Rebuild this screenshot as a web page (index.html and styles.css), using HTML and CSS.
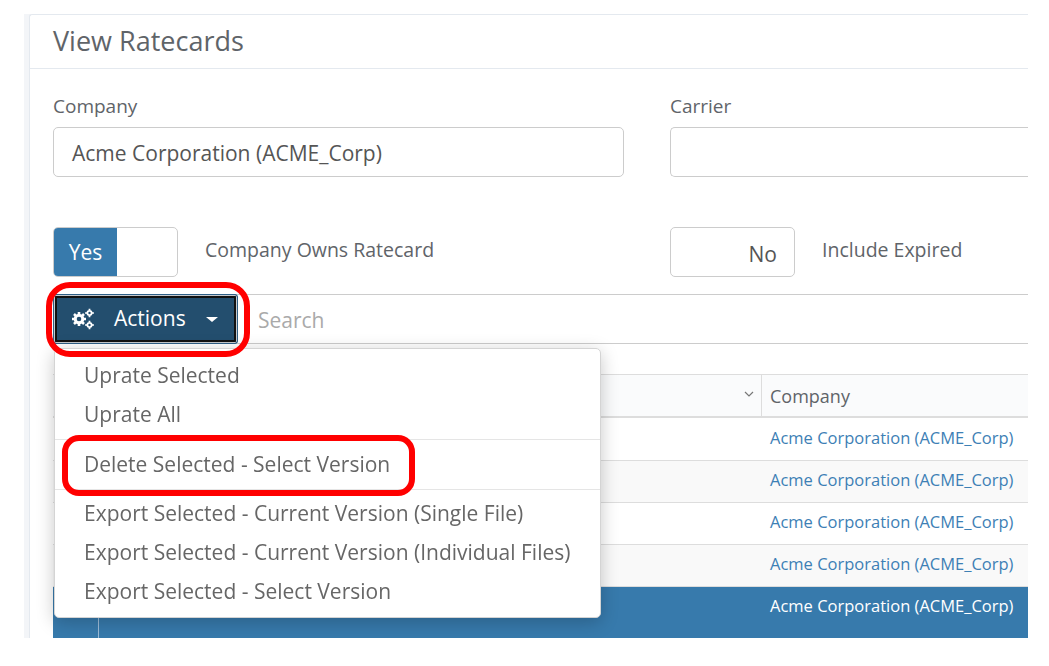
FILE: index.html
```html
<!DOCTYPE html>
<html lang="en">
<head>
<meta charset="utf-8">
<title>View Ratecards</title>
<link rel="stylesheet" href="styles.css">
</head>
<body>
<div class="viewport">
  <div class="strip">
    <main class="card">
      <h1 class="card-title">View Ratecards</h1>
      <div class="card-body">
        <div class="filters">
          <div class="field">
            <label class="field-label">Company</label>
            <div class="input">Acme Corporation (ACME_Corp)</div>
            <div class="toggle-row">
              <div class="toggle"><span class="toggle-yes">Yes</span></div>
              <span class="toggle-label">Company Owns Ratecard</span>
            </div>
          </div>
          <div class="field field-wide">
            <label class="field-label">Carrier</label>
            <div class="input input-open"></div>
            <div class="toggle-row">
              <div class="toggle toggle-off"><span class="toggle-no">No</span></div>
              <span class="toggle-label">Include Expired</span>
            </div>
          </div>
        </div>
        <div class="toolbar">
          <button class="actions">
            <svg class="gears" viewBox="0 0 24 22" width="24" height="22" aria-hidden="true">
              <g fill="none" stroke="#fff">
                <circle cx="8" cy="11" r="3.800" stroke-width="3"/>
                <path d="M8 4v2.500M8 15.500V18M1 11h2.500M12.500 11H15M3 6l1.800 1.800M11.200 14.200L13 16M3 16l1.800-1.800M11.200 7.800L13 6" stroke-width="2.600"/>
                <circle cx="18.500" cy="5" r="2.100" stroke-width="1.800"/>
                <path d="M18.500 .8v1.500M18.500 7.700v1.500M14.300 5h1.500M21.200 5h1.500" stroke-width="1.800"/>
                <circle cx="18.500" cy="17" r="2.100" stroke-width="1.800"/>
                <path d="M18.500 12.800v1.500M18.500 19.700v1.500M14.300 17h1.500M21.200 17h1.500" stroke-width="1.800"/>
              </g>
            </svg>
            <span class="actions-text">Actions</span>
            <span class="caret"></span>
          </button>
          <div class="search">Search</div>
        </div>
        <div class="grid">
          <div class="grid-row grid-head">
            <div class="cell-main"><svg class="chev" viewBox="0 0 10 6" width="10" height="6" aria-hidden="true"><path d="M1 1l4 4 4-4" fill="none" stroke="#777" stroke-width="1.200"/></svg></div>
            <div class="cell-company cell-head">Company</div>
          </div>
          <div class="grid-row"><div class="cell-main"></div><div class="cell-company"><a class="link">Acme Corporation (ACME_Corp)</a></div></div>
          <div class="grid-row grid-alt"><div class="cell-main"></div><div class="cell-company"><a class="link">Acme Corporation (ACME_Corp)</a></div></div>
          <div class="grid-row"><div class="cell-main"></div><div class="cell-company"><a class="link">Acme Corporation (ACME_Corp)</a></div></div>
          <div class="grid-row grid-alt"><div class="cell-main"></div><div class="cell-company"><a class="link">Acme Corporation (ACME_Corp)</a></div></div>
          <div class="grid-row grid-selected"><div class="cell-check"></div><div class="cell-main"></div><div class="cell-company"><a class="link">Acme Corporation (ACME_Corp)</a></div></div>
        </div>
      </div>
    </main>
  </div>
  <ul class="menu">
    <li class="menu-item">Uprate Selected</li>
    <li class="menu-item">Uprate All</li>
    <li class="menu-divider menu-divider-first"></li>
    <li class="menu-item">Delete Selected - Select Version</li>
    <li class="menu-divider"></li>
    <li class="menu-item">Export Selected - Current Version (Single File)</li>
    <li class="menu-item">Export Selected - Current Version (Individual Files)</li>
    <li class="menu-item">Export Selected - Select Version</li>
  </ul>
  <div class="mark mark-actions"></div>
  <div class="mark mark-delete"></div>
</div>
</body>
</html>
```

FILE: styles.css
```css
* { box-sizing: border-box; }
html, body { margin: 0; padding: 0; background: #fff; }
body { font-family: "Open Sans", "Noto Sans", sans-serif; color: #555; }

.viewport { position: relative; width: 1028px; height: 638px; padding: 14px 0 0 24px; overflow: hidden; filter: blur(0.35px); }
.strip { background: #f3f5f8; padding-left: 5px; height: 100%; }
.card { background: #fff; border-top: 1px solid #e4e9ef; border-left: 1px solid #e4e9ef; border-top-left-radius: 3px; height: 700px; }
.card-title { margin: 0; height: 54px; padding: 8px 0 0 23px; font-size: 27px; line-height: 36px; font-weight: 400; color: #5f6469; border-bottom: 1px solid #e4e9ef; }
.card-body { padding: 26px 0 0 23px; }

.filters { display: flex; gap: 46px; }
.field { width: 571px; flex: none; }
.field-wide { width: 500px; }
.field-label { display: block; font-size: 19px; line-height: 26px; height: 34px; margin-top: -2px; color: #5f6469; }
.input { height: 50px; border: 1px solid #ccc; border-radius: 5px; font-size: 21px; line-height: 50px; padding-left: 18px; color: #555; background: #fff; }
.input-open { border-right: 0; border-radius: 5px 0 0 5px; }

.toggle-row { display: flex; margin-top: 50px; height: 50px; }
.toggle { width: 125px; height: 50px; border: 1px solid #ccc; border-radius: 5px; flex: none; overflow: hidden; }
.toggle-yes { display: block; width: 63px; height: 100%; background: #377aac; color: #fff; font-size: 21px; line-height: 49px; text-align: center; }
.toggle-no { display: block; text-align: right; padding-right: 17px; font-size: 21px; line-height: 52px; color: #555; }
.toggle-label { margin-left: 27px; font-size: 19.500px; line-height: 46px; color: #5f6469; }

.toolbar { display: flex; margin-top: 17px; height: 50px; border-top: 1px solid #ccc; border-bottom: 1px solid #ccc; align-items: stretch; }
.actions { display: flex; align-items: center; flex: none; width: 185px; height: 50px; margin: -1px 0; padding: 0 0 2px 17px; background: #234e6e; border: 1px solid #2e5f86; border-radius: 3px; outline: 2px solid #111; outline-offset: -4px; box-shadow: inset 0 0 0 1px #c4c8cc; color: #fff; font: 400 21px "Open Sans", sans-serif; }
.gears { flex: none; margin-top: 2px; }
.actions-text { margin-left: 19px; }
.caret { width: 0; height: 0; margin: 3px 0 0 20px; border-left: 6px solid transparent; border-right: 6px solid transparent; border-top: 5px solid #fff; }
.search { margin-left: 20px; font-size: 21px; line-height: 50px; color: #aaa; }

.grid { margin-top: 30px; }
.grid-row { display: flex; height: 42px; background: #fff; border-bottom: 1px solid #ddd; }
.grid-head { height: 44px; background: #fafbfc; border-top: 1px solid #ddd; border-bottom: 2px solid #ddd; }
.grid-head + .grid-row { height: 43px; }
.grid-head + .grid-row .link { padding-top: 9px; }
.grid-alt { background: #f9f9f9; }
.grid-selected { height: 52px; background: #377aac; border-bottom: 0; }
.cell-check { width: 46px; border-right: 1px solid #9dbcd8; height: 100%; }
.cell-main { width: 708px; flex: none; position: relative; }
.grid-selected .cell-main { width: 662px; }
.cell-company { padding-left: 8px; }
.cell-head { border-left: 1px solid #ddd; font-size: 18px; line-height: 42px; color: #5f6469; }
.chev { position: absolute; right: 7px; top: 16px; }
.link { display: block; padding: 8px 0 0 1px; font-size: 16.500px; line-height: 22px; color: #3d80b5; }
.grid-selected .link { color: #fff; }

.menu { position: absolute; left: 54px; top: 348px; width: 547px; height: 270px; margin: 0; padding: 7px 0 0; list-style: none; background: #fff; border: 1px solid #d4d4d4; border-radius: 5px; box-shadow: 0 4px 18px rgba(0, 0, 0, .22); }
.menu-item { height: 39px; padding-left: 29px; font-size: 21px; line-height: 39px; color: #666; white-space: nowrap; }
.menu-divider { height: 1px; margin: 5px 0 4px; background: #e5e5e5; }
.menu-divider-first { margin-bottom: 5px; }

.mark { position: absolute; border: 6px solid #f00; background: transparent; }
.mark-actions { left: 46px; top: 282px; width: 204px; height: 75px; border-radius: 24px; }
.mark-delete { left: 62px; top: 435px; width: 353px; height: 61px; border-radius: 17px; }
```
